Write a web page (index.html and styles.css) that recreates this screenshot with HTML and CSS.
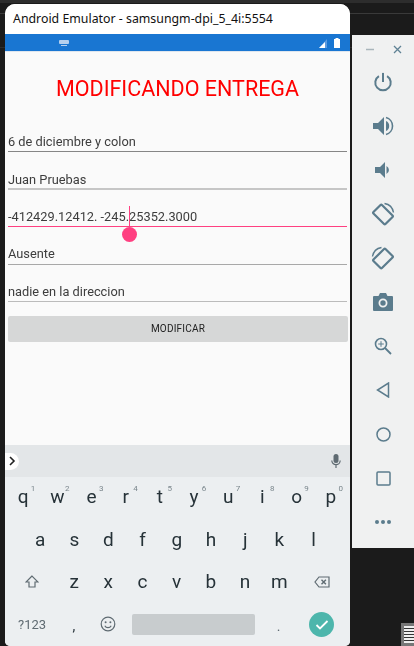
FILE: index.html
```html
<!DOCTYPE html>
<html lang="en">
<head>
  <meta charset="UTF-8" />
  <meta name="viewport" content="width=device-width,initial-scale=1" />
  <title>Android Emulator</title>
  <link rel="stylesheet" href="styles.css">
</head>
<body>
  <div class="desk-band"></div>
  <div class="desk-line line-a"></div>
  <div class="desk-line line-b"></div>

  <div class="emulator">
    <div class="titlebar">Android Emulator - samsungm-dpi_5_4i:5554</div>

    <div class="statusbar">
      <svg class="kb-hint" width="10" height="6" viewBox="0 0 10 6"><rect width="10" height="4" rx="1" fill="#b5d0ee"/><rect x="2" y="5" width="6" height="1" fill="#b5d0ee"/></svg>
      <span class="status-right">
        <svg width="9" height="9" viewBox="0 0 9 9"><path d="M8 0v9H0z" fill="#5c9be0"/><path d="M6 3v6H0z" fill="#fff"/></svg>
        <svg width="6" height="10" viewBox="0 0 6 10"><path d="M1.500 1V0h3v1H6v9H0V1z" fill="#fff"/></svg>
      </span>
    </div>

    <div class="app">
      <h1>MODIFICANDO ENTREGA</h1>
      <div class="field dark">6 de diciembre y colon</div>
      <div class="field light">Juan Pruebas</div>
      <div class="field active">-412429.12412. -245.25352.3000
        <span class="caret"></span>
        <span class="handle"></span>
      </div>
      <div class="field mid">Ausente</div>
      <div class="field soft">nadie en la direccion</div>
      <div class="btn">MODIFICAR</div>
    </div>

    <div class="keyboard">
      <div class="suggest">
        <span class="chevron"><svg width="8" height="10" viewBox="0 0 8 10"><path d="M2 1l4 4-4 4" fill="none" stroke="#222" stroke-width="1.600"/></svg></span>
        <svg width="10" height="14" viewBox="0 0 10 14"><rect x="2.500" y="0" width="5" height="9" rx="2.500" fill="#5f6b72"/><path d="M0.800 6.500a4.200 4.200 0 0 0 8.400 0M5 11v3" fill="none" stroke="#5f6b72" stroke-width="1.200"/></svg>
      </div>

      <div class="row">
        <span class="key">q<sup>1</sup></span><span class="key">w<sup>2</sup></span><span class="key">e<sup>3</sup></span><span class="key">r<sup>4</sup></span><span class="key">t<sup>5</sup></span><span class="key">y<sup>6</sup></span><span class="key">u<sup>7</sup></span><span class="key">i<sup>8</sup></span><span class="key">o<sup>9</sup></span><span class="key">p<sup>0</sup></span>
      </div>
      <div class="row">
        <span class="key wide-half"></span><span class="key">a</span><span class="key">s</span><span class="key">d</span><span class="key">f</span><span class="key">g</span><span class="key">h</span><span class="key">j</span><span class="key">k</span><span class="key">l</span>
      </div>
      <div class="row">
        <span class="key wide">
          <svg width="14" height="13" viewBox="0 0 14 13"><path d="M7 1L1 7h3v5h6V7h3z" fill="none" stroke="#5f6b72" stroke-width="1.200"/></svg>
        </span><span class="key">z</span><span class="key">x</span><span class="key">c</span><span class="key">v</span><span class="key">b</span><span class="key">n</span><span class="key">m</span>
        <span class="key wide">
          <svg width="16" height="12" viewBox="0 0 16 12"><path d="M5 1h10v10H5L1 6z" fill="none" stroke="#5f6b72" stroke-width="1.200"/><path d="M7.500 3.800l4.400 4.400M11.900 3.800L7.500 8.200" stroke="#5f6b72" stroke-width="1.400"/></svg>
        </span>
      </div>
      <div class="row bottom">
        <span class="sym">?123</span>
        <span class="comma">,</span>
        <span class="emoji">
          <svg width="16" height="16" viewBox="0 0 16 16"><circle cx="8" cy="8" r="6.800" fill="none" stroke="#5f6b72" stroke-width="1.200"/><circle cx="5.600" cy="6.300" r="1" fill="#5f6b72"/><circle cx="10.400" cy="6.300" r="1" fill="#5f6b72"/><path d="M4.800 9.700a3.600 3.600 0 0 0 6.400 0" fill="none" stroke="#5f6b72" stroke-width="1.200"/></svg>
        </span>
        <span class="space"></span>
        <span class="dot">.</span>
        <span class="done">
          <svg width="14" height="11" viewBox="0 0 14 11"><path d="M1.500 6l3.500 3.500L12.500 2" fill="none" stroke="#fff" stroke-width="1.800"/></svg>
        </span>
      </div>
    </div>
  </div>

  <div class="sidebar">
    <div class="win-btns">
      <svg width="9" height="9" viewBox="0 0 9 9"><path d="M0 4.500h8" stroke="#a9b5bb" stroke-width="1.500"/></svg>
      <svg width="9" height="9" viewBox="0 0 9 9"><path d="M1 1l7 7M8 1L1 8" stroke="#5f8294" stroke-width="1.300"/></svg>
    </div>
    <!-- power -->
    <span class="tool"><svg width="20" height="20" viewBox="0 0 22 22"><path d="M6.500 4.500a8.500 8.500 0 1 0 9 0" fill="none" stroke="#5b7c8d" stroke-width="2.200"/><path d="M11 1v10" stroke="#5b7c8d" stroke-width="2.200"/></svg></span>
    <!-- volume up -->
    <span class="tool"><svg width="22" height="22" viewBox="0 0 22 22"><path d="M1 8h5l6-6v18l-6-6H1z" fill="#5b7c8d"/><path d="M14 6a5.500 5.500 0 0 1 0 10z" fill="#5b7c8d"/><path d="M14 2.500a8.800 8.800 0 0 1 0 17" fill="none" stroke="#5b7c8d" stroke-width="1.600"/></svg></span>
    <!-- volume down -->
    <span class="tool"><svg width="22" height="22" viewBox="0 0 22 22"><path d="M3 8h5l5-5v16l-5-5H3z" fill="#5b7c8d"/><path d="M14.500 7a4.500 4.500 0 0 1 0 8z" fill="#5b7c8d"/></svg></span>
    <!-- rotate left -->
    <span class="tool"><svg width="24" height="24" viewBox="0 0 24 24"><rect x="6" y="4" width="12" height="17" rx="1" transform="rotate(-45 12 12.500)" fill="none" stroke="#5b7c8d" stroke-width="2.200"/><path d="M13.500 1.500a11 11 0 0 1 9 9" fill="none" stroke="#5b7c8d" stroke-width="1.400"/></svg></span>
    <!-- rotate right -->
    <span class="tool"><svg width="24" height="24" viewBox="0 0 24 24"><rect x="6" y="4" width="12" height="17" rx="1" transform="rotate(45 12 12.500)" fill="none" stroke="#5b7c8d" stroke-width="2.200"/><path d="M1.500 10.500a11 11 0 0 1 9-9" fill="none" stroke="#5b7c8d" stroke-width="1.400"/></svg></span>
    <!-- camera -->
    <span class="tool"><svg width="20" height="18" viewBox="0 0 20 18"><path d="M1 3h4.500l1.500-3h6l1.500 3H19a1 1 0 0 1 1 1v13a1 1 0 0 1-1 1H1a1 1 0 0 1-1-1V4a1 1 0 0 1 1-1z" fill="#5b7c8d"/><circle cx="10" cy="10" r="3.600" fill="none" stroke="#f0f1f1" stroke-width="1.800"/></svg></span>
    <!-- zoom -->
    <span class="tool"><svg width="18" height="18" viewBox="0 0 18 18"><circle cx="7" cy="7" r="5.500" fill="none" stroke="#5b7c8d" stroke-width="1.600"/><path d="M11 11l6 6" stroke="#5b7c8d" stroke-width="1.800"/><path d="M7 4.200v5.600M4.200 7h5.600" stroke="#5b7c8d" stroke-width="1"/></svg></span>
    <!-- back -->
    <span class="tool"><svg width="14" height="16" viewBox="0 0 14 16"><path d="M12.500 1v14L1.500 8z" fill="none" stroke="#5b7c8d" stroke-width="1.500"/></svg></span>
    <!-- home -->
    <span class="tool"><svg width="15" height="15" viewBox="0 0 15 15"><circle cx="7.500" cy="7.500" r="6.500" fill="none" stroke="#5b7c8d" stroke-width="1.500"/></svg></span>
    <!-- overview -->
    <span class="tool"><svg width="15" height="15" viewBox="0 0 15 15"><rect x="1" y="1" width="13" height="13" rx="1" fill="none" stroke="#5b7c8d" stroke-width="1.500"/></svg></span>
    <!-- more -->
    <span class="tool"><svg width="16" height="4" viewBox="0 0 16 4"><circle cx="2" cy="2" r="2" fill="#5b7c8d"/><circle cx="8" cy="2" r="2" fill="#5b7c8d"/><circle cx="14" cy="2" r="2" fill="#5b7c8d"/></svg></span>
  </div>

  <div class="taskbar-btn"><span></span></div>
</body>
</html>
```

FILE: styles.css
```css
html, body { margin: 0; padding: 0; }
body {
  position: relative;
  width: 414px;
  height: 646px;
  overflow: hidden;
  background: #1b1b1b;
  font-family: Roboto, sans-serif;
  display: flex;
  align-items: flex-start;
}

/* faint lines of the ide behind the windows */
.desk-band { position: absolute; left: 0; right: 0; top: 0; height: 3px; background: #2d2d2d; }
.desk-line { position: absolute; left: 0; right: 0; height: 1px; background: #3a3a3a; }
.line-a { top: 13px; }
.line-b { top: 47px; background: #2c2c2c; }

.emulator {
  position: relative;
  margin: 4px 0 0 5px;
  width: 345px;
  height: 642px;
  background: #fafafa;
  border-radius: 10px 10px 5px 5px;
  overflow: hidden;
  display: flex;
  flex-direction: column;
}

.titlebar {
  height: 30px;
  line-height: 30px;
  padding-left: 8px;
  background: #fff;
  color: #111;
  font-family: "Noto Sans", sans-serif;
  font-size: 12.350px;
  white-space: nowrap;
}

.statusbar {
  height: 17px;
  background: #1976d2;
  display: flex;
  align-items: center;
  justify-content: space-between;
  padding: 0 10px 0 54px;
}
.status-right { display: flex; align-items: flex-end; gap: 6px; }

.app {
  flex: 1;
  padding: 0 3px;
  border-top: 1px solid #dfe6ee;
  filter: blur(0.3px);
}
h1 {
  margin: 24px 0 23px;
  text-align: center;
  color: #ff0000;
  font-size: 21.500px;
  line-height: 26px;
  font-weight: 400;
}

.field {
  position: relative;
  height: 19.500px;
  padding-top: 6.500px;
  line-height: 19px;
  margin-bottom: 10.500px;
  font-size: 12.800px;
  color: #3d3d3d;
  border-bottom: 1px solid #999;
}
.field.dark { border-color: #868686; }
.field.light { border-color: #c6c6c6; border-bottom-width: 2px; height: 17.500px; padding-top: 7.500px; }
.field.active { border-color: #ff4081; }
.field.mid { border-color: #a8a8a8; }
.field.soft { border-color: #bbb; }

.caret {
  position: absolute;
  left: 121px;
  top: 6px;
  width: 1px;
  height: 20px;
  background: #ff4081;
}
.handle {
  position: absolute;
  left: 114px;
  top: 27px;
  width: 15px;
  height: 15px;
  border-radius: 50%;
  background: #ff4081;
}

.btn {
  height: 26px;
  line-height: 26px;
  margin: 14px -1px 0 0;
  text-align: center;
  background: #d6d7d7;
  border-radius: 2px;
  font-size: 10px;
  letter-spacing: 0.2px;
  color: #222;
}

.keyboard {
  height: 201px;
  background: #eceff1;
  color: #263238;
  filter: blur(0.3px);
}
.suggest {
  height: 32px;
  background: #e3e6e8;
  display: flex;
  align-items: center;
  justify-content: space-between;
  padding-right: 9px;
}
.chevron {
  width: 14px;
  height: 17px;
  background: #fff;
  border-radius: 0 9px 9px 0;
  display: flex;
  align-items: center;
  justify-content: center;
}

.row {
  display: flex;
  height: 39.500px;
  padding: 0 0 3px 1px;
}
.key {
  position: relative;
  width: 34.200px;
  flex: none;
  display: flex;
  align-items: center;
  justify-content: center;
  font-size: 19px;
}
.key.wide-half { width: 17px; }
.key.wide { width: 51px; }
.key sup {
  position: absolute;
  top: 7px;
  right: 5px;
  font-size: 8px;
  line-height: 10px;
  color: #7a868c;
}

.bottom { align-items: center; }
.sym { width: 58px; padding-left: 12px; box-sizing: border-box; font-size: 13px; color: #5f6b72; flex: none; }
.comma { width: 20px; flex: none; font-size: 14px; text-align: center; margin-top: 4px; }
.emoji { width: 42px; flex: none; display: flex; justify-content: center; margin: 0 3px; }
.space { width: 123px; height: 21px; flex: none; background: #c8ccce; border-radius: 2px; }
.dot { width: 47px; flex: none; text-align: center; font-size: 14px; color: #5f6b72; margin-top: 4px; }
.done {
  width: 25px;
  height: 25px;
  flex: none;
  border-radius: 50%;
  background: #4db6ac;
  display: flex;
  align-items: center;
  justify-content: center;
  margin-left: 7px;
}

.sidebar {
  position: relative;
  margin: 35px 0 0 2px;
  width: 62px;
  height: 513px;
  background: #f0f1f1;
  display: flex;
  flex-direction: column;
  align-items: center;
}
.win-btns {
  width: 100%;
  height: 25px;
  display: flex;
  justify-content: space-between;
  padding: 10px 12px 0 14px;
  box-sizing: border-box;
}
.tool {
  height: 44px;
  flex: none;
  display: flex;
  align-items: center;
  justify-content: center;
  filter: blur(0.3px);
}

.taskbar-btn {
  position: absolute;
  left: 401px;
  top: 623px;
  width: 13px;
  height: 23px;
  background: #777;
  box-sizing: border-box;
  padding: 3px 0 0 3px;
}
.taskbar-btn span {
  display: block;
  height: 17px;
  background: repeating-linear-gradient(#eee 0 2px, #333 2px 3px);
}
```
